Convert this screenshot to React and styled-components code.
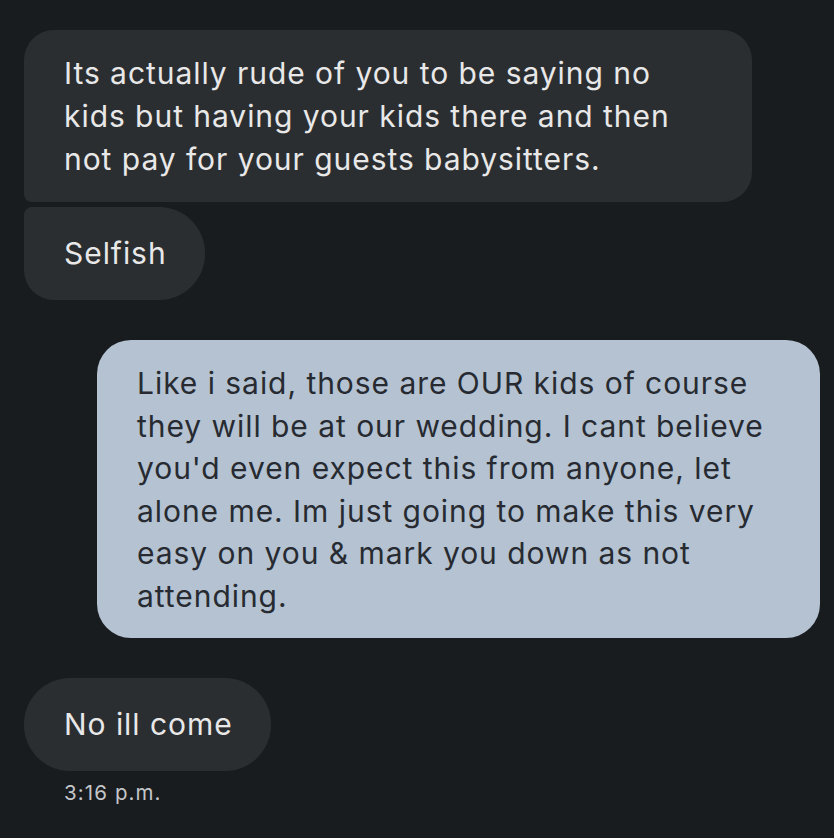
import React from 'react';
import styled, { createGlobalStyle } from 'styled-components';

const messages = [
  {
    id: 1,
    sent: false,
    shape: 'first',
    width: 728,
    lines: [
      'Its actually rude of you to be saying no',
      'kids but having your kids there and then',
      'not pay for your guests babysitters.',
    ],
  },
  { id: 2, sent: false, shape: 'last', lines: ['Selfish'] },
  {
    id: 3,
    sent: true,
    shape: 'single',
    width: 723,
    lines: [
      'Like i said, those are OUR kids of course',
      "they will be at our wedding. I cant believe",
      "you'd even expect this from anyone, let",
      'alone me. Im just going to make this very',
      'easy on you & mark you down as not',
      'attending.',
    ],
  },
  { id: 4, sent: false, shape: 'single', lines: ['No ill come'], time: '3:16 p.m.' },
];

const GlobalStyle = createGlobalStyle`
  html, body {
    margin: 0;
    padding: 0;
    background: #191c1f;
  }
  body {
    font-family: Inter, Roboto, "Liberation Sans", sans-serif;
  }
`;

const Screen = styled.main`
  width: 834px;
  height: 838px;
  box-sizing: border-box;
  padding: 30px 14px 0 24px;
  background: #191c1f;
  display: flex;
  flex-direction: column;
  overflow: hidden;
`;

const Row = styled.div`
  display: flex;
  flex-direction: column;
  align-items: ${(p) => (p.$sent ? 'flex-end' : 'flex-start')};
  margin-top: ${(p) => p.$gap}px;
`;

const radius = {
  first: '30px 30px 30px 8px',
  last: '8px 46px 46px 30px',
  single: '46px',
};

const Bubble = styled.div`
  box-sizing: border-box;
  width: ${(p) => (p.$width ? `${p.$width}px` : 'fit-content')};
  padding: ${(p) => (p.$short ? '25px 38px 25px 40px' : '22px 40px 21px')};
  background: ${(p) => (p.$sent ? '#b4c2d2' : '#2b2e31')};
  color: ${(p) => (p.$sent ? '#272b31' : '#e8e8e8')};
  border-radius: ${(p) => (p.$sent ? '34px' : radius[p.$shape])};
  font-size: 30px;
  line-height: ${(p) => (p.$sent ? '42.5px' : '43px')};
  letter-spacing: 0.95px;
  white-space: nowrap;
`;

const Time = styled.span`
  margin: 10px 0 0 40px;
  font-size: 20.5px;
  line-height: 24px;
  letter-spacing: 1.1px;
  color: #c3c6ca;
`;

function gapFor(msg, prev) {
  if (!prev) return 0;
  if (prev.sent !== msg.sent) return 40;
  return msg.shape === 'last' ? 5 : 40;
}

export default function App() {
  return (
    <>
      <GlobalStyle />
      <Screen>
        {messages.map((msg, i) => (
          <Row key={msg.id} $sent={msg.sent} $gap={gapFor(msg, messages[i - 1])}>
            <Bubble
              $sent={msg.sent}
              $shape={msg.shape}
              $width={msg.width}
              $short={msg.lines.length === 1}
            >
              {msg.lines.map((line, j) => (
                <React.Fragment key={j}>
                  {j > 0 && <br />}
                  {line}
                </React.Fragment>
              ))}
            </Bubble>
            {msg.time && <Time>{msg.time}</Time>}
          </Row>
        ))}
      </Screen>
    </>
  );
}
